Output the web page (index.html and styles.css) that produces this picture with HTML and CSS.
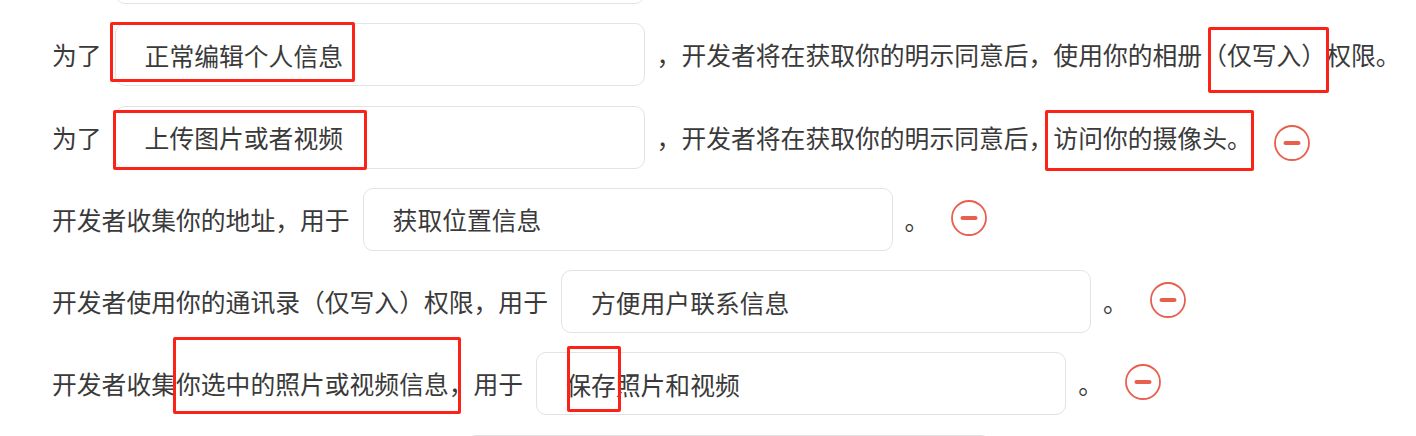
FILE: index.html
```html
<!DOCTYPE html>
<html>
<head>
    <title>权限说明</title>
    <meta charset="UTF-8">
    <link rel="stylesheet" href="styles.css">
</head>
<body>
    <div class="page">
        <div class="list">
            <!-- row scrolled above the top edge, only its field border shows -->
            <div class="row">
                <input type="text" class="field field-first">
            </div>
            <div class="row">
                <span class="label">为了</span>
                <input type="text" class="field" value="正常编辑个人信息">
                <span class="text">，开发者将在获取你的明示同意后，使用你的相册（仅写入）权限。</span>
            </div>
            <div class="row">
                <span class="label">为了</span>
                <input type="text" class="field" value="上传图片或者视频">
                <span class="text">，开发者将在获取你的明示同意后，访问你的摄像头。</span>
                <span class="remove remove-low">
                    <svg viewBox="0 0 36 36" width="36" height="36"><circle cx="18" cy="18" r="17" fill="none" stroke="#e8604d" stroke-width="1.8"/><line x1="11.5" y1="18" x2="24.5" y2="18" stroke="#e8604d" stroke-width="4" stroke-linecap="round"/></svg>
                </span>
            </div>
            <div class="row">
                <span class="label">开发者收集你的地址，用于</span>
                <input type="text" class="field" value="获取位置信息">
                <span class="text">。</span>
                <span class="remove">
                    <svg viewBox="0 0 36 36" width="36" height="36"><circle cx="18" cy="18" r="17" fill="none" stroke="#e8604d" stroke-width="1.8"/><line x1="11.5" y1="18" x2="24.5" y2="18" stroke="#e8604d" stroke-width="4" stroke-linecap="round"/></svg>
                </span>
            </div>
            <div class="row">
                <span class="label">开发者使用你的通讯录（仅写入）权限，用于</span>
                <input type="text" class="field" value="方便用户联系信息">
                <span class="text">。</span>
                <span class="remove">
                    <svg viewBox="0 0 36 36" width="36" height="36"><circle cx="18" cy="18" r="17" fill="none" stroke="#e8604d" stroke-width="1.8"/><line x1="11.5" y1="18" x2="24.5" y2="18" stroke="#e8604d" stroke-width="4" stroke-linecap="round"/></svg>
                </span>
            </div>
            <div class="row">
                <span class="label">开发者收集你选中的照片或视频信息，用于</span>
                <input type="text" class="field" value="保存照片和视频">
                <span class="text">。</span>
                <span class="remove">
                    <svg viewBox="0 0 36 36" width="36" height="36"><circle cx="18" cy="18" r="17" fill="none" stroke="#e8604d" stroke-width="1.8"/><line x1="11.5" y1="18" x2="24.5" y2="18" stroke="#e8604d" stroke-width="4" stroke-linecap="round"/></svg>
                </span>
            </div>
            <!-- next row, cut by the bottom edge -->
            <div class="row">
                <input type="text" class="field field-last">
            </div>
        </div>

        <!-- annotation boxes drawn over the screenshot -->
        <div class="mark mark-1"></div>
        <div class="mark mark-2"></div>
        <div class="mark mark-3"></div>
        <div class="mark mark-4"></div>
        <div class="mark mark-5"></div>
        <div class="mark mark-6"></div>
    </div>
</body>
</html>
```

FILE: styles.css
```css
* { margin: 0; padding: 0; box-sizing: border-box; }
html, body { height: 100%; }
body { font-family: "Noto Sans CJK SC", "Noto Sans", sans-serif; background: #fff; color: #3a3a3a; overflow: hidden; }
.page { position: relative; height: 436px; overflow: hidden; }
.list { padding-left: 52px; margin-top: -59px; }
.row { display: flex; align-items: center; height: 63px; margin-bottom: 19.25px; white-space: nowrap; font-size: 24.8px; }
.label, .text { flex-shrink: 0; line-height: 1; }
.field { flex-shrink: 0; width: 530px; height: 63px; margin-left: 13px; padding-left: 29px; border: 1.5px solid #e3e3e3; border-radius: 10px; background: #fff; font: inherit; color: #3a3a3a; outline: none; }
.field-first { margin-left: 63px; }
.field-last { margin-left: 414px; width: 525px; }
.text { margin-left: 12px; }
.remove { flex-shrink: 0; display: flex; width: 36px; height: 36px; margin-left: 22px; margin-top: -3px; }
.remove-low { margin-top: 11px; }
.mark { position: absolute; border: 3px solid #fb2218; border-radius: 2px; }
.mark-1 { left: 110px; top: 22px; width: 245px; height: 60px; }
.mark-2 { left: 113px; top: 110px; width: 254px; height: 60px; }
.mark-3 { left: 1208px; top: 27px; width: 121px; height: 66px; }
.mark-4 { left: 1045px; top: 110px; width: 209px; height: 61px; }
.mark-5 { left: 173px; top: 337px; width: 288px; height: 77px; }
.mark-6 { left: 567px; top: 346px; width: 54px; height: 66px; }
```
